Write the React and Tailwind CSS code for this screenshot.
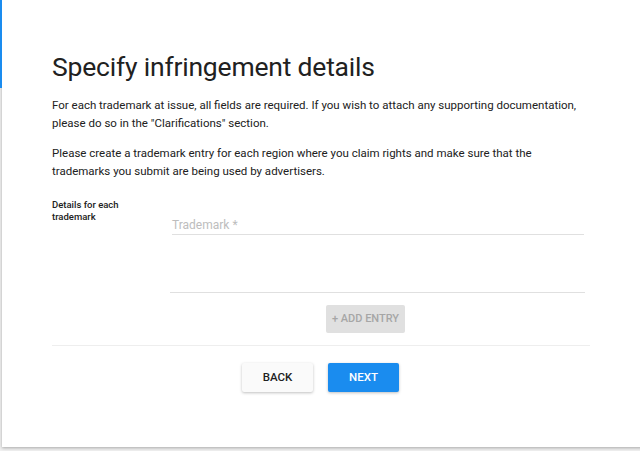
export default function App() {
  return (
    <div className="w-[640px] h-[451px] bg-[#f0f0f0] overflow-hidden relative" style={{ fontFamily: 'Roboto, "Liberation Sans", sans-serif' }}>
      <div className="absolute left-0 top-0 w-[2px] h-[88px] bg-[#1a8cef]" />
      <div className="ml-[2px] w-[660px] h-[447px] bg-white shadow-[0_1px_3px_rgba(0,0,0,0.3)] pl-[50px] pt-[52px]">
        <h1 className="text-[26.5px] leading-[30px] text-[#212121] font-normal tracking-[-0.2px]">Specify infringement details</h1>
        <p className="mt-[14px] text-[11.5px] leading-[18px] text-[#212121] w-[560px]">
          For each trademark at issue, all fields are required. If you wish to attach any supporting documentation, please do so in the "Clarifications" section.
        </p>
        <p className="mt-[12px] text-[11.5px] leading-[18px] text-[#212121] w-[540px]">
          Please create a trademark entry for each region where you claim rights and make sure that the trademarks you submit are being used by advertisers.
        </p>
        <div className="flex mt-[19px] w-[538px]">
          <div className="w-[118px] text-[9.5px] leading-[12px] font-medium text-[#212121]">Details for each<br />trademark</div>
          <div className="flex-1 flex flex-col">
            <div className="ml-[2px] mt-[18px] w-[412px] border-b border-[#e0e0e0] pb-[1px] text-[12px] leading-[16px] text-[#bdbdbd]">Trademark *</div>
            <div className="h-[58px] w-[415px] border-b border-[#e0e0e0]" />
            <div className="flex mt-[12px] w-[415px] pl-[156px]">
              <div className="w-[79px] h-[28px] rounded-[2px] bg-[#e0e0e0] text-[#a6a6a6] text-[11px] font-medium flex items-center justify-center">+ ADD ENTRY</div>
            </div>
          </div>
        </div>
        <div className="mt-[12px] w-[538px] h-px bg-[#eeeeee]" />
        <div className="flex mt-[17px] w-[538px] pl-[190px] gap-[15px]">
          <div className="w-[71px] h-[29px] rounded-[2px] bg-[#fafafa] shadow-[0_1px_3px_rgba(0,0,0,0.25)] text-[#212121] text-[11.5px] font-medium flex items-center justify-center">BACK</div>
          <div className="w-[71px] h-[29px] rounded-[2px] bg-[#1a8cef] shadow-[0_1px_3px_rgba(0,0,0,0.25)] text-white text-[11.5px] font-medium flex items-center justify-center">NEXT</div>
        </div>
      </div>
    </div>
  );
}
